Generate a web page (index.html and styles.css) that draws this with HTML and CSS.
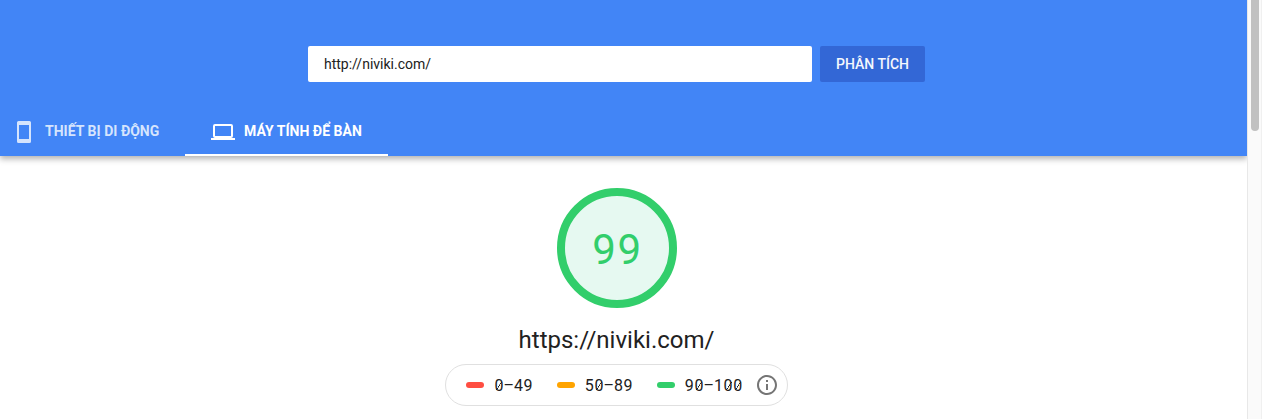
FILE: index.html
```html
<!DOCTYPE html>
<html lang="vi">
<head>
<meta charset="utf-8">
<title>https://niviki.com/</title>
<link rel="stylesheet" href="styles.css">
</head>
<body>
<div class="page">
  <header class="header">
    <form class="search">
      <div class="url-field">http://niviki.com/</div>
      <button class="analyze" type="button">PHÂN TÍCH</button>
    </form>
    <nav class="tabs">
      <a class="tab tab-mobile">
        <svg class="tab-icon" viewBox="0 0 24 24"><path fill="currentColor" fill-rule="evenodd" d="M6.500 1h11a1.500 1.500 0 0 1 1.500 1.500v19a1.500 1.500 0 0 1-1.500 1.500h-11a1.500 1.500 0 0 1-1.500-1.500v-19a1.500 1.500 0 0 1 1.500-1.500zM7 5v14h10V5z"/></svg>
        <span>THIẾT BỊ DI ĐỘNG</span>
      </a>
      <a class="tab tab-desktop active">
        <svg class="tab-icon" viewBox="0 0 24 24"><path fill="currentColor" fill-rule="evenodd" d="M20 18a2 2 0 0 0 2-2V6a2 2 0 0 0-2-2H4a2 2 0 0 0-2 2v10a2 2 0 0 0 2 2H0v2h24v-2zM4 6h16v10H4z"/></svg>
        <span>MÁY TÍNH ĐỂ BÀN</span>
      </a>
    </nav>
  </header>
  <main class="report">
    <div class="gauge"><span>99</span></div>
    <div class="site">https://niviki.com/</div>
    <div class="scale">
      <div class="range"><i class="bar fail"></i><span class="low"><b class="zero">0</b><b class="dash">–</b>49</span></div>
      <div class="range"><i class="bar average"></i><span class="mid">5<b class="zero">0</b><b class="dash">–</b>89</span></div>
      <div class="range"><i class="bar pass"></i><span class="high">9<b class="zero">0</b><b class="dash">–</b>1<b class="zero">0</b><b class="zero">0</b></span></div>
      <svg class="info" viewBox="0 0 24 24"><path fill="currentColor" d="M11 17h2v-6h-2v6zm1-15C6.480 2 2 6.480 2 12s4.480 10 10 10 10-4.480 10-10S17.520 2 12 2zm0 18c-4.410 0-8-3.590-8-8s3.590-8 8-8 8 3.590 8 8-3.590 8-8 8zM11 9h2V7h-2v2z"/></svg>
    </div>
  </main>
</div>
<aside class="scrollbar"><div class="thumb"></div></aside>
</body>
</html>
```
FILE: styles.css
```css
* { box-sizing: border-box; }
body {
  margin: 0;
  height: 419px;
  display: flex;
  overflow: hidden;
  background: #fff;
  color: #212121;
  font-family: Roboto, "Liberation Sans", sans-serif;
}
.page { width: 1247px; overflow: hidden; }
.header {
  height: 156px;
  padding-top: 46px;
  background: #4285f6;
  box-shadow: 0 3px 6px rgba(0, 0, 0, .3);
}
.search {
  display: flex;
  gap: 8px;
  margin-left: 308px;
  height: 36px;
}
.url-field {
  width: 504px;
  padding-left: 16px;
  border-radius: 2px;
  background: #fff;
  font-size: 14px;
  line-height: 36px;
}
.analyze {
  width: 105px;
  padding: 0;
  border: 0;
  border-radius: 2px;
  background: #3367d6;
  color: #f4f7fd;
  font: 500 14px/36px Roboto, sans-serif;
}
.tabs { display: flex; margin-top: 26px; height: 48px; }
.tab {
  display: flex;
  align-items: center;
  height: 48px;
  color: #fff;
  font-size: 14px;
  font-weight: 700;
  letter-spacing: .02px;
  white-space: nowrap;
}
.tab-icon { width: 24px; height: 24px; flex: none; }
.tab span { margin-top: -2px; }
.tab-mobile { width: 185px; padding-left: 12px; gap: 9px; color: #d5e4fd; }
.tab-desktop { width: 203px; padding-left: 26px; gap: 9px; }
.active { box-shadow: inset 0 -2px #fff; }
.report {
  display: flex;
  flex-direction: column;
  align-items: center;
  width: 1233px;
  padding-top: 32px;
}
.gauge {
  width: 120px;
  height: 120px;
  margin-left: 1px;
  padding-left: 1px;
  border: 8px solid #32ce6b;
  border-radius: 50%;
  background: #e6f9f1;
  color: #32ce6b;
  font-size: 42px;
  line-height: 107px;
  letter-spacing: 1.6px;
  text-align: center;
}
.site { height: 32px; margin-top: 16px; font-size: 24px; line-height: 32px; }
.scale {
  display: flex;
  align-items: center;
  width: 343px;
  height: 42px;
  margin-top: 8px;
  padding-left: 20.4px;
  border: 1px solid #e0e0e0;
  border-radius: 21px;
  font-size: 16px;
  letter-spacing: .61px;
  white-space: nowrap;
}
.range { display: flex; align-items: center; gap: 10px; margin-right: 24px; }
.low { width: 38.4px; }
.mid { width: 48px; }
.high { width: 57.6px; }
.bar { width: 18px; height: 6px; border-radius: 3px; }
.fail { background: #ff4e42; }
.average { background: #ffa400; }
.pass { background: #32ce6b; }
.zero {
  font-weight: inherit;
  background: linear-gradient(122deg, transparent 45%, #212121 47%, #212121 53%, transparent 55%) 2px 6px / 6px 8px no-repeat;
}
.dash { font-weight: inherit; margin: 0 -.6px; }
.info { width: 24px; height: 24px; margin-left: -11.8px; color: #757575; }
.scrollbar {
  width: 15px;
  padding-left: 3px;
  border-left: 1px solid #e8e8e8;
  border-right: 1px solid #f0f0f0;
  background: #fafafa;
}
.thumb { width: 8px; height: 131px; border-radius: 0 0 4px 4px; background: #c1c1c1; }
```
